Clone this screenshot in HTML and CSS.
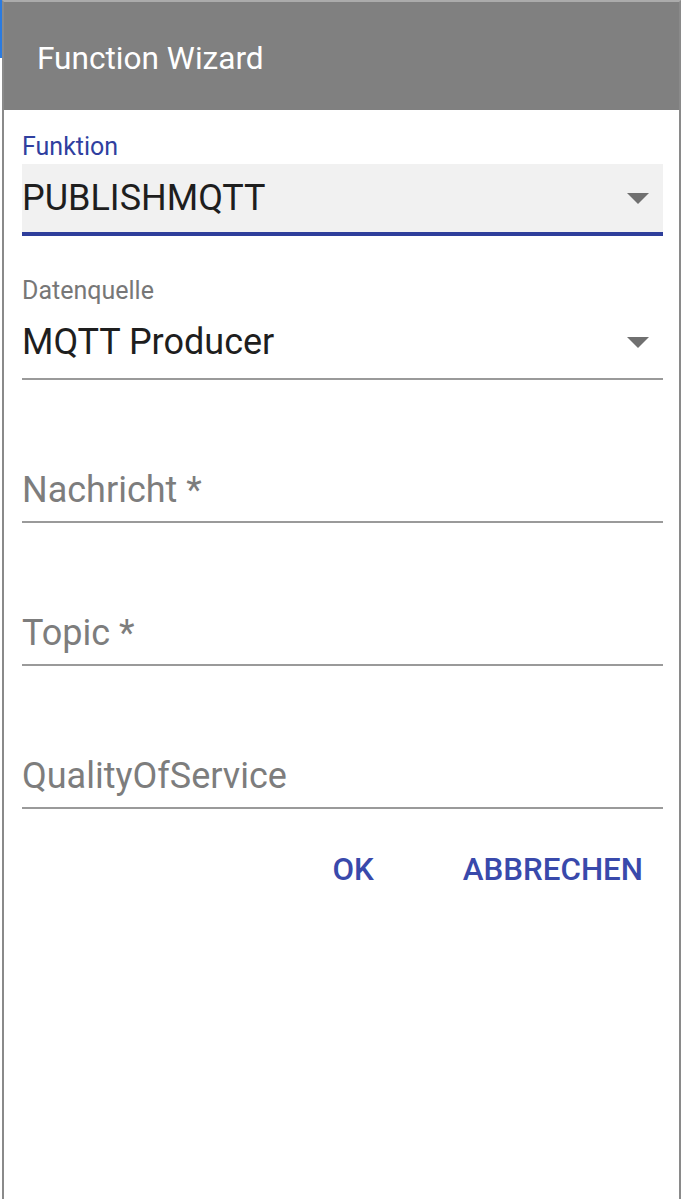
FILE: index.html
```html
<!DOCTYPE html>
<html lang="de">
<head>
<meta charset="utf-8">
<title>Function Wizard</title>
<link rel="stylesheet" href="styles.css">
</head>
<body>
<div class="page">
  <div class="bg-strip"><div class="bg-blue"></div></div>
  <div class="dialog">
    <div class="dialog-header">Function Wizard</div>
    <div class="dialog-body">
      <div class="field field-select field-filled">
        <label class="field-label focused">Funktion</label>
        <div class="select-box filled">
          <span class="select-value">PUBLISHMQTT</span>
          <span class="caret"></span>
        </div>
      </div>
      <div class="field field-select field-plain">
        <label class="field-label">Datenquelle</label>
        <div class="select-box">
          <span class="select-value">MQTT Producer</span>
          <span class="caret"></span>
        </div>
      </div>
      <div class="field field-text">
        <div class="text-box"><span class="placeholder">Nachricht *</span></div>
      </div>
      <div class="field field-text">
        <div class="text-box"><span class="placeholder">Topic *</span></div>
      </div>
      <div class="field field-text">
        <div class="text-box"><span class="placeholder">QualityOfService</span></div>
      </div>
      <div class="actions">
        <button class="btn btn-ok">OK</button>
        <button class="btn btn-cancel">ABBRECHEN</button>
      </div>
    </div>
  </div>
</div>
</body>
</html>
```

FILE: styles.css
```css
html, body {
  margin: 0;
  padding: 0;
  background: #ffffff;
  font-family: Roboto, "Liberation Sans", Arial, sans-serif;
}

.page {
  display: flex;
  height: 1199px;
  overflow: hidden;
}

.bg-strip {
  width: 2px;
  flex: none;
  background: #ffffff;
}

.bg-blue {
  height: 58px;
  background: #2b7be0;
}

.dialog {
  flex: 1;
  border-left: 2px solid #8a8a8a;
  border-right: 2px solid #8a8a8a;
  border-top: 2px solid #ababab;
  background: #ffffff;
  display: flex;
  flex-direction: column;
}

.dialog-header {
  height: 108px;
  background: #808080;
  color: #ffffff;
  font-size: 31.6px;
  font-weight: 400;
  padding-left: 33px;
  padding-top: 5px;
  display: flex;
  align-items: center;
  box-sizing: border-box;
}

.dialog-body {
  padding: 0 16px 0 18px;
  display: flex;
  flex-direction: column;
}

.field {
  display: flex;
  flex-direction: column;
}

.field-label {
  font-size: 25px;
  color: #777777;
  line-height: 30px;
}

.field-label.focused {
  color: #303f9f;
}

.field-filled {
  margin-top: 22px;
}

.field-filled .field-label {
  margin-bottom: 2px;
}

.select-box {
  display: flex;
  align-items: center;
  justify-content: space-between;
  border-bottom: 2px solid #9a9a9a;
  height: 74px;
  padding-right: 14px;
  box-sizing: border-box;
}

.select-box.filled {
  background: #f1f1f1;
  height: 72px;
  border-bottom: 4px solid #2e3e9b;
}

.select-value {
  font-size: 36px;
  color: #1e1e1e;
}

.caret {
  width: 0;
  height: 0;
  border-left: 11px solid transparent;
  border-right: 11px solid transparent;
  border-top: 11px solid #707070;
}

.field-plain {
  margin-top: 40px;
}

.text-box {
  height: 143px;
  border-bottom: 2px solid #9a9a9a;
  box-sizing: border-box;
  display: flex;
  align-items: flex-end;
  padding-bottom: 11px;
}

.placeholder {
  font-size: 36px;
  color: #7d7d7d;
  line-height: 40px;
}

.actions {
  display: flex;
  justify-content: flex-end;
  margin-top: 36px;
  gap: 49px;
}

.btn {
  background: none;
  border: none;
  font-family: Roboto, "Liberation Sans", Arial, sans-serif;
  font-size: 31.3px;
  font-weight: 500;
  color: #3949ab;
  padding: 6px 20px;
  cursor: pointer;
}
```
